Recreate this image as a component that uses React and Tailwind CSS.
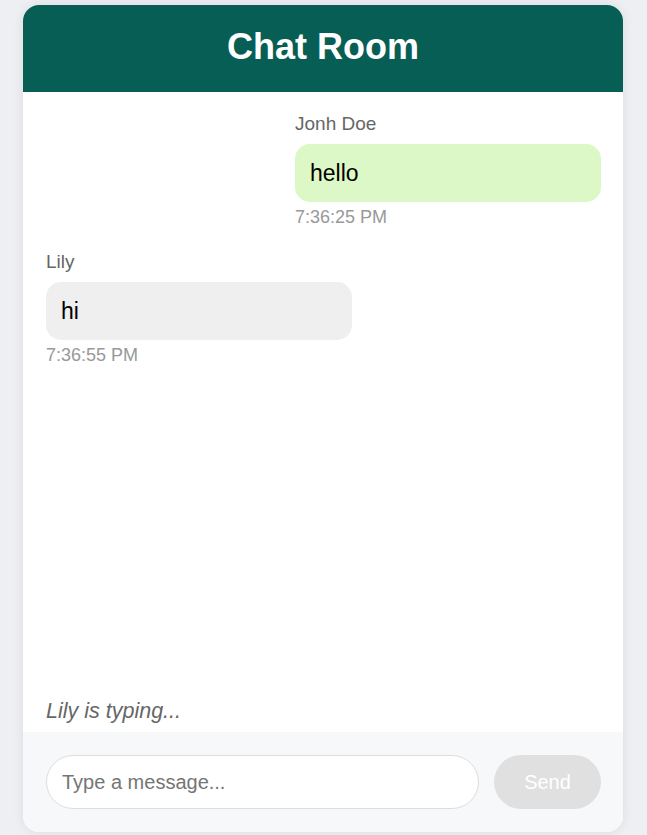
export default function App() {
  const messages = [
    { id: 1, user: "Jonh Doe", text: "hello", time: "7:36:25 PM", mine: true },
    { id: 2, user: "Lily", text: "hi", time: "7:36:55 PM", mine: false },
  ];

  return (
    <div className="min-h-[835px] bg-[#eeeff3] pt-[5px] font-[family-name:'Liberation_Sans',Arial,sans-serif]">
      <div className="ml-[23px] flex h-[827px] w-[600px] flex-col overflow-hidden rounded-[16px] bg-white shadow-[0_0_12px_rgba(0,0,0,0.08)]">
        <div className="flex h-[87px] shrink-0 items-center justify-center bg-[#075e54] pb-[3px]">
          <h1 className="text-[36px] font-bold leading-none text-white">Chat Room</h1>
        </div>

        <div className="flex flex-1 flex-col gap-[25px] pl-[23px] pr-[22px] pt-[22px]">
          {messages.map((m) => (
            <div key={m.id} className={m.mine ? "flex flex-col items-end" : "flex flex-col items-start"}>
              <div className="w-[306px]">
                <div className="mb-[10px] text-[19px] leading-[20px] text-[#666]">{m.user}</div>
                <div
                  className={`rounded-[15px] px-[15px] py-[15px] text-[23px] leading-[28px] text-black ${
                    m.mine ? "bg-[#dcf8c6]" : "bg-[#efefef]"
                  }`}
                >
                  {m.text}
                </div>
                <div className="mt-[5px] text-[18px] leading-[20px] text-[#999]">{m.time}</div>
              </div>
            </div>
          ))}
        </div>

        <div className="px-[23px] pb-[9px] text-[21.5px] italic leading-[24px] text-[#666]">Lily is typing...</div>

        <div className="flex h-[100px] shrink-0 items-center gap-[15px] bg-[#f7f8fa] pl-[23px] pr-[22px]">
          <input
            type="text"
            placeholder="Type a message..."
            className="h-[54px] w-[433px] rounded-full border border-[#ddd] bg-white px-[15px] text-[20px] text-[#333] outline-none placeholder:text-[#757575]"
          />
          <button
            type="button"
            disabled
            className="h-[54px] w-[107px] rounded-full bg-[#e0e0e0] text-[20px] text-white"
          >
            Send
          </button>
        </div>
      </div>
    </div>
  );
}
